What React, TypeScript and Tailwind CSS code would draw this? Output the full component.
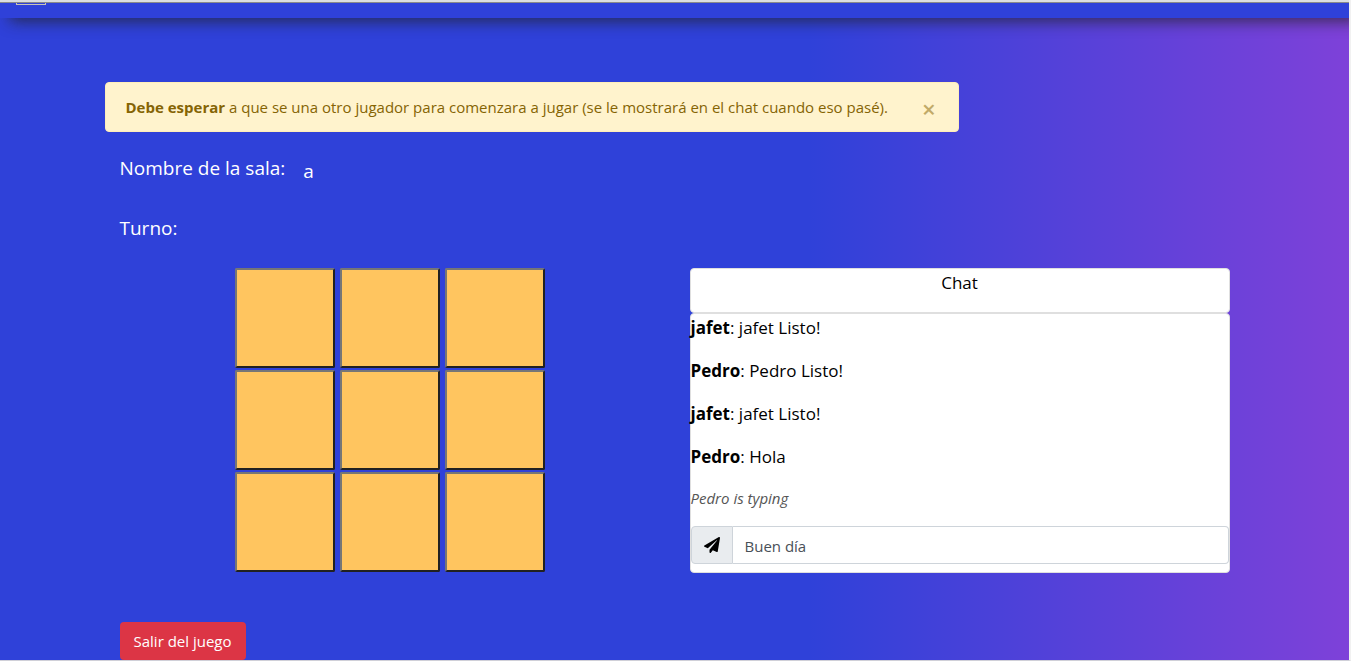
import { useState } from "react";
import { FaPaperPlane } from "react-icons/fa";

type Message = { author: string; text: string };

const messages: Message[] = [
  { author: "jafet", text: "jafet Listo!" },
  { author: "Pedro", text: "Pedro Listo!" },
  { author: "jafet", text: "jafet Listo!" },
  { author: "Pedro", text: "Hola" },
];

function Board() {
  return (
    <div className="grid grid-cols-3 content-start gap-x-[5px] gap-y-0.5">
      {Array.from({ length: 9 }, (_, i) => (
        <button
          key={i}
          type="button"
          aria-label={`Casilla ${i + 1}`}
          className="size-[100px] rounded-xs border-2 border-t-[#767676] border-r-[#212121] border-b-[#212121] border-l-[#767676] bg-[#ffc55f]"
        />
      ))}
    </div>
  );
}

function Chat() {
  const [draft, setDraft] = useState("Buen día");
  return (
    <section className="text-[17px] leading-[27px] text-black">
      <h2 className="h-[45px] rounded border border-[#dfdfdf] bg-white text-center">Chat</h2>
      <div className="rounded border border-[#dfdfdf] bg-white pb-2">
        {messages.map((m, i) => (
          <p key={i} className="mb-4">
            <strong>{m.author}</strong>: {m.text}
          </p>
        ))}
        <p className="mb-4 text-[15px] leading-6 text-[#555] italic">Pedro is typing</p>
        <form className="flex h-[38px]" onSubmit={(e) => e.preventDefault()}>
          <button
            type="submit"
            aria-label="Enviar"
            className="flex w-[42px] items-center justify-center rounded-l border border-[#ced4da] bg-[#e9ecef]"
          >
            <FaPaperPlane className="size-4" />
          </button>
          <input
            type="text"
            aria-label="Mensaje"
            value={draft}
            onChange={(e) => setDraft(e.target.value)}
            className="min-w-0 flex-1 rounded-r border border-l-0 border-[#ced4da] bg-white px-3 pt-0.5 text-[15px] text-[#495057] outline-none"
          />
        </form>
      </div>
    </section>
  );
}

export default function App() {
  const [showAlert, setShowAlert] = useState(true);
  return (
    <div className="min-h-screen overflow-hidden border-r-2 border-b border-r-[#f1f1f1] border-b-[#d0d0d8] bg-[linear-gradient(to_right,#2f41d9_60%,#7e41d9)] font-['Open_Sans','Noto_Sans',sans-serif]">
      <header className="h-[18px] border-t-2 border-[#dcdee0] bg-[#2f41d9] shadow-[10px_3px_15px_rgba(33,33,33,0.75)]">
        <div className="flex border-t border-[#8a8a8a] pl-4">
          <div className="h-0.5 w-[30px] border-x border-b border-[#c8c4b8]" />
        </div>
      </header>
      <main className="mx-auto max-w-[1140px] px-[15px] pt-16">
        <div className="h-[50px]">
          {showAlert && (
            <div
              role="alert"
              className="-ml-[15px] flex h-full w-fit items-center rounded border border-[#ffeeba] bg-[#fff3cd] pl-5 text-[15px] text-[#856404]"
            >
              <p>
                <strong>Debe esperar</strong> a que se una otro jugador para comenzara a jugar (se le mostrará en el chat
                cuando eso pasé).
              </p>
              <button
                type="button"
                aria-label="Cerrar"
                onClick={() => setShowAlert(false)}
                className="ml-3 w-[58px] pt-1 text-2xl leading-6 font-semibold opacity-50"
              >
                ×
              </button>
            </div>
          )}
        </div>
        <div className="mt-5 flex text-[19px] leading-8 text-white">
          <h1>Nombre de la sala:</h1>
          <span className="mt-[3px] ml-[18px]">a</span>
        </div>
        <h2 className="mt-[25px] text-[19px] leading-8 text-white">Turno:</h2>
        <div className="mt-6 grid grid-cols-2 gap-[30px]">
          <div className="flex justify-center">
            <Board />
          </div>
          <Chat />
        </div>
        <button type="button" className="mt-[49px] h-[38px] rounded bg-[#dc3545] px-3.5 text-[15px] text-white">
          Salir del juego
        </button>
      </main>
    </div>
  );
}
